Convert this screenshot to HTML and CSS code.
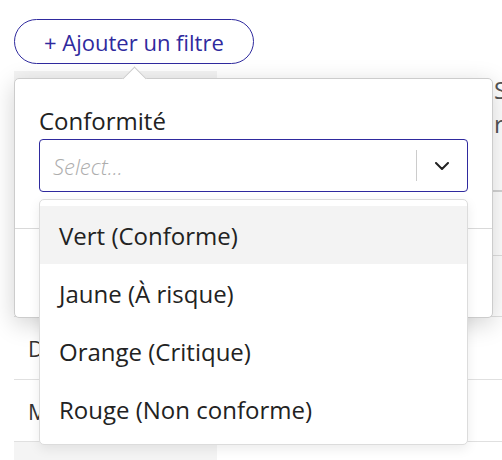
FILE: index.html
```html
<!DOCTYPE html>
<html lang="fr">
<head>
<meta charset="utf-8">
<title>Filtres</title>
<link rel="stylesheet" href="styles.css">
</head>
<body>
<div class="page">
  <div class="filter-wrap">
    <button class="add-filter" type="button">+ Ajouter un filtre</button>
    <div class="popover">
      <div class="popover-body">
        <label class="field-label">Conformité</label>
        <div class="select">
          <div class="select-control">
            <div class="select-value">Select...</div>
            <div class="select-indicators">
              <span class="select-sep"></span>
              <span class="select-arrow">
                <svg width="14" height="8" viewBox="0 0 14 8"><path d="M1 1l6 6 6-6" fill="none" stroke="#222" stroke-width="2" stroke-linecap="round" stroke-linejoin="round"/></svg>
              </span>
            </div>
          </div>
          <ul class="menu">
            <li class="option is-focused">Vert (Conforme)</li>
            <li class="option">Jaune (À risque)</li>
            <li class="option">Orange (Critique)</li>
            <li class="option">Rouge (Non conforme)</li>
          </ul>
        </div>
      </div>
      <div class="popover-footer"></div>
    </div>
  </div>

  <table class="data">
    <thead>
      <tr>
        <th class="col-name">Entreprise</th>
        <th class="col-mid">Secteur</th>
        <th class="col-status">Statut<br>réglementaire</th>
      </tr>
    </thead>
    <tbody>
      <tr class="r1"><td class="col-name">Alpha Conseil</td><td>Services</td><td class="col-status">Vert</td></tr>
      <tr class="r2"><td class="col-name">Bernard &amp; Co</td><td>Industrie</td><td class="col-status">Jaune</td></tr>
      <tr class="r3"><td class="col-name">Durand SA</td><td>Transport</td><td class="col-status">Orange</td></tr>
      <tr class="r4"><td class="col-name">Martin Fils</td><td>Commerce</td><td class="col-status">Rouge</td></tr>
      <tr class="r5 shaded"><td class="col-name">Petit SARL</td><td>Énergie</td><td class="col-status">Vert</td></tr>
    </tbody>
  </table>
</div>
</body>
</html>
```

FILE: styles.css
```css
html, body {
  margin: 0;
  padding: 0;
  overflow: hidden;
  background: #ffffff;
  font-family: "Open Sans", "Liberation Sans", sans-serif;
  color: #222222;
}

.page {
  padding: 19px 0 0 14px;
}

.filter-wrap {
  position: relative;
}

.add-filter {
  display: block;
  height: 45px;
  padding: 0 29px;
  border: 1px solid #2f2a9e;
  border-radius: 23px;
  background: #ffffff;
  color: #2f2a9e;
  font-family: "Open Sans", "Liberation Sans", sans-serif;
  font-size: 22px;
  line-height: 1;
  cursor: pointer;
}

.popover {
  position: absolute;
  top: 59px;
  left: 0;
  width: 479px;
  box-sizing: border-box;
  background: #ffffff;
  border: 1px solid #cccccc;
  border-radius: 5px;
  box-shadow: 0 6px 24px rgba(0, 0, 0, 0.18);
  z-index: 10;
}

.popover::before {
  content: "";
  position: absolute;
  top: -9px;
  left: 111px;
  width: 16px;
  height: 16px;
  background: #ffffff;
  border-left: 1px solid #cccccc;
  border-top: 1px solid #cccccc;
  transform: rotate(45deg);
}

.popover-body {
  padding: 25px 24px 36px 24px;
}

.field-label {
  display: block;
  font-size: 24px;
  line-height: 33px;
  color: #222222;
}

.select {
  position: relative;
  margin-top: 2px;
}

.select-control {
  display: flex;
  align-items: center;
  height: 53px;
  box-sizing: border-box;
  border: 1px solid #2f2a9e;
  border-radius: 4px;
  background: #ffffff;
}

.select-value {
  flex: 1;
  padding-left: 13px;
  font-size: 22px;
  font-style: italic;
  font-weight: 300;
  color: #adadad;
}

.select-indicators {
  display: flex;
  align-items: center;
  align-self: stretch;
}

.select-sep {
  width: 1px;
  align-self: stretch;
  margin: 10px 0;
  background: #cccccc;
}

.select-arrow {
  display: flex;
  align-items: center;
  justify-content: center;
  width: 50px;
}

.menu {
  position: absolute;
  top: calc(100% + 7px);
  left: 0;
  right: 0;
  margin: 0;
  padding: 6px 0;
  list-style: none;
  background: #ffffff;
  border: 1px solid #dcdcdc;
  border-radius: 5px;
  box-shadow: 0 4px 12px rgba(0, 0, 0, 0.08);
  z-index: 20;
}

.option {
  height: 58px;
  display: flex;
  align-items: center;
  padding-left: 19px;
  font-size: 24px;
  color: #222222;
}

.option.is-focused {
  background: #f3f3f3;
}

.popover-footer {
  height: 88px;
  border-top: 1px solid #d9d9d9;
}

.data {
  margin-top: 7px;
  border-collapse: collapse;
  table-layout: fixed;
  width: 666px;
  font-size: 22px;
  color: #333333;
}

.data th,
.data td {
  padding: 0 14px;
  text-align: left;
  white-space: nowrap;
  overflow: hidden;
}

.data th {
  height: 120px;
  vertical-align: top;
  font-weight: 400;
  font-size: 24px;
  line-height: 34px;
  color: #555555;
  border-bottom: 2px solid #d4d4d4;
  padding-top: 2px;
  box-sizing: border-box;
}

.data th.col-name {
  width: 203px;
  background: #f3f3f3;
}

.data th.col-mid {
  width: 263px;
}

.data th.col-status {
  width: 200px;
}

.data td {
  border-bottom: 1px solid #e0e0e0;
}

.data td.col-status {
  text-align: right;
}

.data .r1 td { height: 63px; }
.data .r2 td { height: 60px; }
.data .r3 td { height: 62px; }
.data .r4 td { height: 61px; }
.data .r5 td { height: 61px; }

.data tr.shaded td.col-name {
  background: #f4f4f4;
}
```
